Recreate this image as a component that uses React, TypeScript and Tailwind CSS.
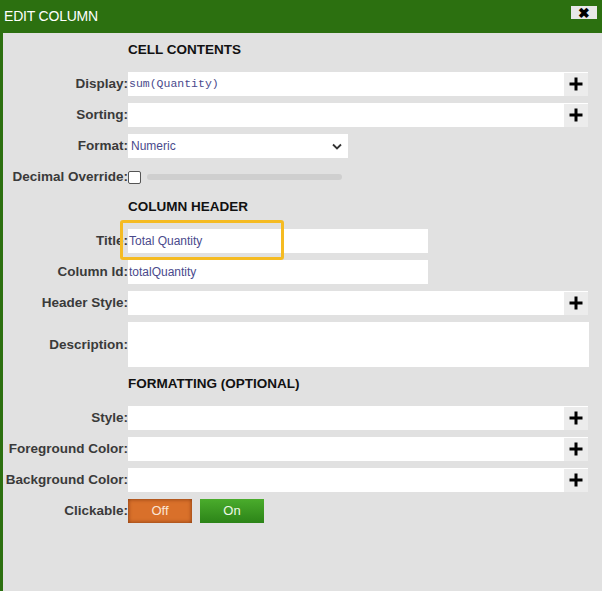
import React from "react"

function Plus() {
  return (
    <div className="w-[24px] h-[23px] bg-[#ececec] flex items-center justify-center shrink-0">
      <svg width="16" height="16" viewBox="0 0 16 16">
        <path d="M8 1.5v13M1.5 8h13" stroke="#000" strokeWidth="3" />
      </svg>
    </div>
  )
}

function Row({ label, children, className = "" }: { label: string; children?: React.ReactNode; className?: string }) {
  return (
    <div className={"flex items-center " + className}>
      <div className="w-[125px] shrink-0 text-right text-[13.5px] font-bold text-[#3a3a3a] leading-none">{label}</div>
      {children}
    </div>
  )
}

function InputPlus({ value, mono }: { value?: string; mono?: boolean }) {
  return (
    <div className="w-[460px] h-[24px] bg-white flex items-center justify-between pl-[1px]">
      <span className={mono ? "text-[11.5px] text-[#4a4a8c] font-['Liberation_Mono',monospace]" : "text-[12px] text-[#4a4a8c]"}>{value}</span>
      <Plus />
    </div>
  )
}

function Heading({ text, className = "" }: { text: string; className?: string }) {
  return (
    <div className={"pl-[125px] h-[16px] leading-[16px] text-[13.5px] font-bold text-[#111] " + className}>{text}</div>
  )
}

export default function App() {
  return (
    <div className="w-[602px] h-[591px] bg-[#e1e1e1] font-['Liberation_Sans',Arial,sans-serif] flex flex-col overflow-hidden">
      <div className="h-[33px] bg-[#2c7010] flex items-center justify-between pl-[4px] pr-[5px] shrink-0">
        <span className="text-white text-[14px] tracking-[-0.2px]">EDIT COLUMN</span>
        <div className="w-[26px] h-[13px] bg-[#e8e8e8] flex items-center justify-center mb-[8px] text-[14px] font-black leading-none text-black">✖</div>
      </div>
      <div className="flex-1 border-l-[3px] border-[#2c7010] flex flex-col">
        <Heading text="CELL CONTENTS" className="mt-[9px]" />
        <Row label="Display:" className="mt-[14px]">
          <InputPlus value="sum(Quantity)" mono />
        </Row>
        <Row label="Sorting:" className="mt-[7px]">
          <InputPlus />
        </Row>
        <Row label="Format:" className="mt-[7px]">
          <div className="w-[220px] h-[24px] bg-white flex items-center justify-between pl-[3px] pr-[6px]">
            <span className="text-[12px] text-[#4a4a8c]">Numeric</span>
            <svg width="10" height="7" viewBox="0 0 10 7">
              <path d="M1 1.5l4 4 4-4" stroke="#333" strokeWidth="1.8" fill="none" />
            </svg>
          </div>
        </Row>
        <Row label="Decimal Override:" className="mt-[7px] h-[24px]">
          <div className="w-[13px] h-[13px] bg-white border border-[#555] rounded-[2px] shrink-0" />
          <div className="ml-[6px] w-[195px] h-[6px] rounded-full bg-[#cfcfcf]" />
        </Row>
        <Heading text="COLUMN HEADER" className="mt-[10px]" />
        <Row label="Title:" className="mt-[14px]">
          <div className="relative w-[300px] h-[24px] bg-white flex items-center pl-[1px]">
            <span className="text-[12px] text-[#4a4a8c]">Total Quantity</span>
            <div className="absolute left-[-8px] top-[-9px] w-[164px] h-[40px] border-[3px] border-[#f5bb22] rounded-[3px]" />
          </div>
        </Row>
        <Row label="Column Id:" className="mt-[7px]">
          <div className="w-[300px] h-[24px] bg-white flex items-center pl-[1px]">
            <span className="text-[12px] text-[#4a4a8c]">totalQuantity</span>
          </div>
        </Row>
        <Row label="Header Style:" className="mt-[7px]">
          <InputPlus />
        </Row>
        <Row label="Description:" className="mt-[7px]">
          <div className="w-[461px] h-[45px] bg-white" />
        </Row>
        <Heading text="FORMATTING (OPTIONAL)" className="mt-[9px]" />
        <Row label="Style:" className="mt-[14px]">
          <InputPlus />
        </Row>
        <Row label="Foreground Color:" className="mt-[7px]">
          <InputPlus />
        </Row>
        <Row label="Background Color:" className="mt-[7px]">
          <InputPlus />
        </Row>
        <Row label="Clickable:" className="mt-[7px]">
          <div className="w-[64px] h-[24px] bg-[#d9702a] shadow-[inset_0_0_4px_rgba(90,30,0,0.7)] flex items-center justify-center text-[13px] text-[#fbe6d6]">Off</div>
          <div className="ml-[8px] w-[64px] h-[24px] bg-gradient-to-b from-[#4aac2c] to-[#2c8418] flex items-center justify-center text-[13px] text-[#eef8e8]">On</div>
        </Row>
      </div>
    </div>
  )
}
